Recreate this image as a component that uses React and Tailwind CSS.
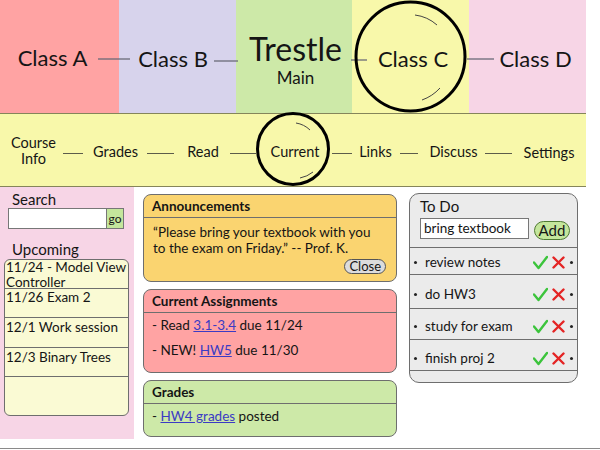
import React from 'react';

const upcoming = [
  { text: ['11/24 - Model View', 'Controller'], cls: 'h-[29px] pt-0' },
  { text: ['11/26 Exam 2'], cls: 'h-[29px] pt-px' },
  { text: ['12/1 Work session'], cls: 'h-[30px] pt-[2px]' },
  { text: ['12/3 Binary Trees'], cls: 'h-[29px] pt-[2px]' },
];

const todos = [
  { label: 'review notes', cls: 'h-[27px] pt-[2px]' },
  { label: 'do HW3', cls: 'h-[34px] pt-[5px]' },
  { label: 'study for exam', cls: 'h-[31px] pt-[4px]' },
  { label: 'finish proj 2', cls: 'h-[31px] pt-[6px]' },
];

const Dash = ({ className }) => <span className={`h-px bg-[#5c5c4a] mt-[2px] ${className}`} />;

const Check = () => (
  <svg width="15" height="15" viewBox="0 0 15 15">
    <path d="M1 7.5 L5.5 13 L14 2" fill="none" stroke="#3cc43c" strokeWidth="2.4" strokeLinecap="round" strokeLinejoin="round" />
  </svg>
);

const Cross = () => (
  <svg width="13" height="13" viewBox="0 0 13 13">
    <path d="M1.5 1.5 L11.5 11.5 M11.5 1.5 L1.5 11.5" fill="none" stroke="#e42424" strokeWidth="2.4" strokeLinecap="round" />
  </svg>
);

const Panel = ({ title, bg, className, children }) => (
  <div className={`rounded-[8px] border border-[#6e6e6e] ${bg} ${className}`}>
    <div className="h-[23px] border-b border-[#6e6e6e] px-[8px] flex items-center text-[13.5px] font-bold">{title}</div>
    {children}
  </div>
);

const App = () => {
  return (
    <div className="relative w-[600px] h-[450px] bg-white overflow-hidden font-[Lato,sans-serif] text-[#151515]">
      {/* course tabs */}
      <header className="flex h-[113px] w-[586px] text-[22px]">
        <div className="w-[119px] bg-[#ffa3a3] flex items-center justify-center pr-[14px] pt-[2px]">Class A</div>
        <div className="w-[117px] bg-[#d7d3ec] flex items-center justify-center pr-[9px] pt-[4px]">Class B</div>
        <div className="w-[116px] bg-[#cde9a8] flex flex-col items-center justify-center pt-[6px] pl-[3px]">
          <span className="text-[32px] leading-none">Trestle</span>
          <span className="text-[17px] leading-none mt-[4px]">Main</span>
        </div>
        <div className="w-[117px] bg-[#f8f8aa] flex items-center justify-center pl-[5px] pt-[3px]">Class C</div>
        <div className="w-[117px] bg-[#f7d5e6] flex items-center justify-center pl-[16px] pt-[3px]">Class D</div>
      </header>

      {/* section nav */}
      <nav className="w-[586px] h-[74px] bg-[#f8f8aa] border-y border-[#85855a] flex items-center pt-[4px] text-[14.5px]">
        <span className="ml-[8px] w-[51px] text-center leading-[16px] -mt-[2px]">Course<br />Info</span>
        <Dash className="ml-[4px] w-[20px]" />
        <span className="ml-[7px] w-[51px] text-center">Grades</span>
        <Dash className="ml-[6px] w-[27px]" />
        <span className="ml-[9px] w-[40px] text-center">Read</span>
        <Dash className="ml-[7px] w-[26px]" />
        <span className="ml-[9px] w-[60px] text-center">Current</span>
        <Dash className="ml-[7px] w-[20px]" />
        <span className="ml-[4px] w-[39px] text-center">Links</span>
        <Dash className="ml-[5px] w-[18px]" />
        <span className="ml-[7px] w-[57px] text-center">Discuss</span>
        <Dash className="ml-[3px] w-[27px]" />
        <span className="ml-[5px] w-[64px] text-center mt-[2px]">Settings</span>
      </nav>

      <div className="flex h-[262px] border-b border-[#8a8a8a]">
        {/* sidebar */}
        <aside className="w-[134px] h-[252px] bg-[#f7d5e6] flex flex-col">
          <div className="ml-[12px] mt-[3px] text-[15px] leading-[18px]">Search</div>
          <div className="ml-[8px] flex h-[21px]">
            <div className="w-[99px] bg-white border border-[#777]" />
            <button className="w-[17px] bg-[#c4e69c] border border-l-0 border-[#777] text-[12px] leading-none flex items-center justify-center">go</button>
          </div>
          <div className="ml-[12px] mt-[11px] text-[15px] leading-[18px]">Upcoming</div>
          <div className="ml-[4px] mt-[1px] w-[125px] h-[157px] rounded-[6px] border border-[#6e6e6e] bg-[#fafad4] flex flex-col text-[13.5px] leading-[15px] overflow-hidden">
            {upcoming.map((u, i) => (
              <div key={i} className={`px-[1px] border-b border-[#6e6e6e] ${u.cls}`}>
                {u.text.map((t) => <div key={t} className="whitespace-nowrap">{t}</div>)}
              </div>
            ))}
            <div className="flex-1" />
          </div>
        </aside>

        {/* center column */}
        <main className="ml-[9px] pt-[7px] w-[254px] flex flex-col gap-[7px]">
          <Panel title="Announcements" bg="bg-[#fad470]" className="h-[88px]">
            <div className="px-[9px] pt-[6px] text-[13.5px] leading-[16px]">
              “Please bring your textbook with you<br />to the exam on Friday.” -- Prof. K.
            </div>
            <div className="flex justify-end pr-[10px] mt-[3px]">
              <button className="h-[15px] px-[4px] rounded-full bg-[#dcdcdc] border border-[#555] text-[13px] leading-none flex items-center">Close</button>
            </div>
          </Panel>
          <Panel title="Current Assignments" bg="bg-[#ffa3a3]" className="h-[84px]">
            <div className="px-[8px] text-[13.5px] leading-[25px]">
              <div>- Read <a className="text-[#3b3bc4] underline">3.1-3.4</a> due 11/24</div>
              <div>- NEW! <a className="text-[#3b3bc4] underline">HW5</a> due 11/30</div>
            </div>
          </Panel>
          <Panel title="Grades" bg="bg-[#cde9a8]" className="h-[57px]">
            <div className="px-[8px] text-[13.5px] leading-[25px]">
              - <a className="text-[#3b3bc4] underline">HW4 grades</a> posted
            </div>
          </Panel>
        </main>

        {/* to do */}
        <section className="ml-[12px] mt-[6px] w-[169px] h-[190px] rounded-[10px] border border-[#6e6e6e] bg-[#ebebeb] flex flex-col overflow-hidden">
          <div className="h-[54px] border-b border-[#6e6e6e] pl-[10px] pt-[3px]">
            <div className="text-[15px] leading-[18px]">To Do</div>
            <div className="mt-[3px] flex items-start">
              <div className="w-[109px] h-[21px] bg-white border border-[#777] px-[3px] text-[13.5px] leading-[19px]">bring textbook</div>
              <button className="ml-[5px] mt-[3px] w-[36px] h-[19px] rounded-full bg-[#c4e69c] border border-[#4f7a33] text-[15px] leading-none flex items-center justify-center">Add</button>
            </div>
          </div>
          {todos.map((t) => (
            <div key={t.label} className={`border-b border-[#6e6e6e] flex items-center pl-[4px] pr-[4px] text-[13.5px] ${t.cls}`}>
              <span className="w-[3px] h-[3px] rounded-full bg-[#222]" />
              <span className="ml-[8px] flex-1">{t.label}</span>
              <Check />
              <span className="ml-[4px]"><Cross /></span>
              <span className="ml-[5px] w-[3px] h-[3px] rounded-full bg-[#222]" />
            </div>
          ))}
        </section>
      </div>

      {/* connectors and focus circles */}
      <svg className="absolute inset-0 pointer-events-none" width="600" height="450" viewBox="0 0 600 450">
        <g stroke="#6a6a78" strokeWidth="1.3">
          <line x1="98" y1="59" x2="130" y2="59" />
          <line x1="214" y1="61" x2="238" y2="61" />
          <line x1="351" y1="60" x2="367" y2="60" />
          <line x1="467" y1="59" x2="494" y2="59" />
        </g>
        <circle cx="410.5" cy="56.5" r="54.5" fill="none" stroke="#000" strokeWidth="3" />
        <path d="M415 15 A41 41 0 0 1 437 25" fill="none" stroke="#444" strokeWidth="1" />
        <path d="M440 88 A44 44 0 0 1 422 100" fill="none" stroke="#444" strokeWidth="1" />
        <circle cx="293" cy="149" r="35.5" fill="none" stroke="#000" strokeWidth="3" />
        <path d="M296 123 A26 26 0 0 1 310 130" fill="none" stroke="#444" strokeWidth="1" />
        <path d="M313 172 A30 30 0 0 1 300 178" fill="none" stroke="#444" strokeWidth="1" />
      </svg>
    </div>
  );
};

export default App;
